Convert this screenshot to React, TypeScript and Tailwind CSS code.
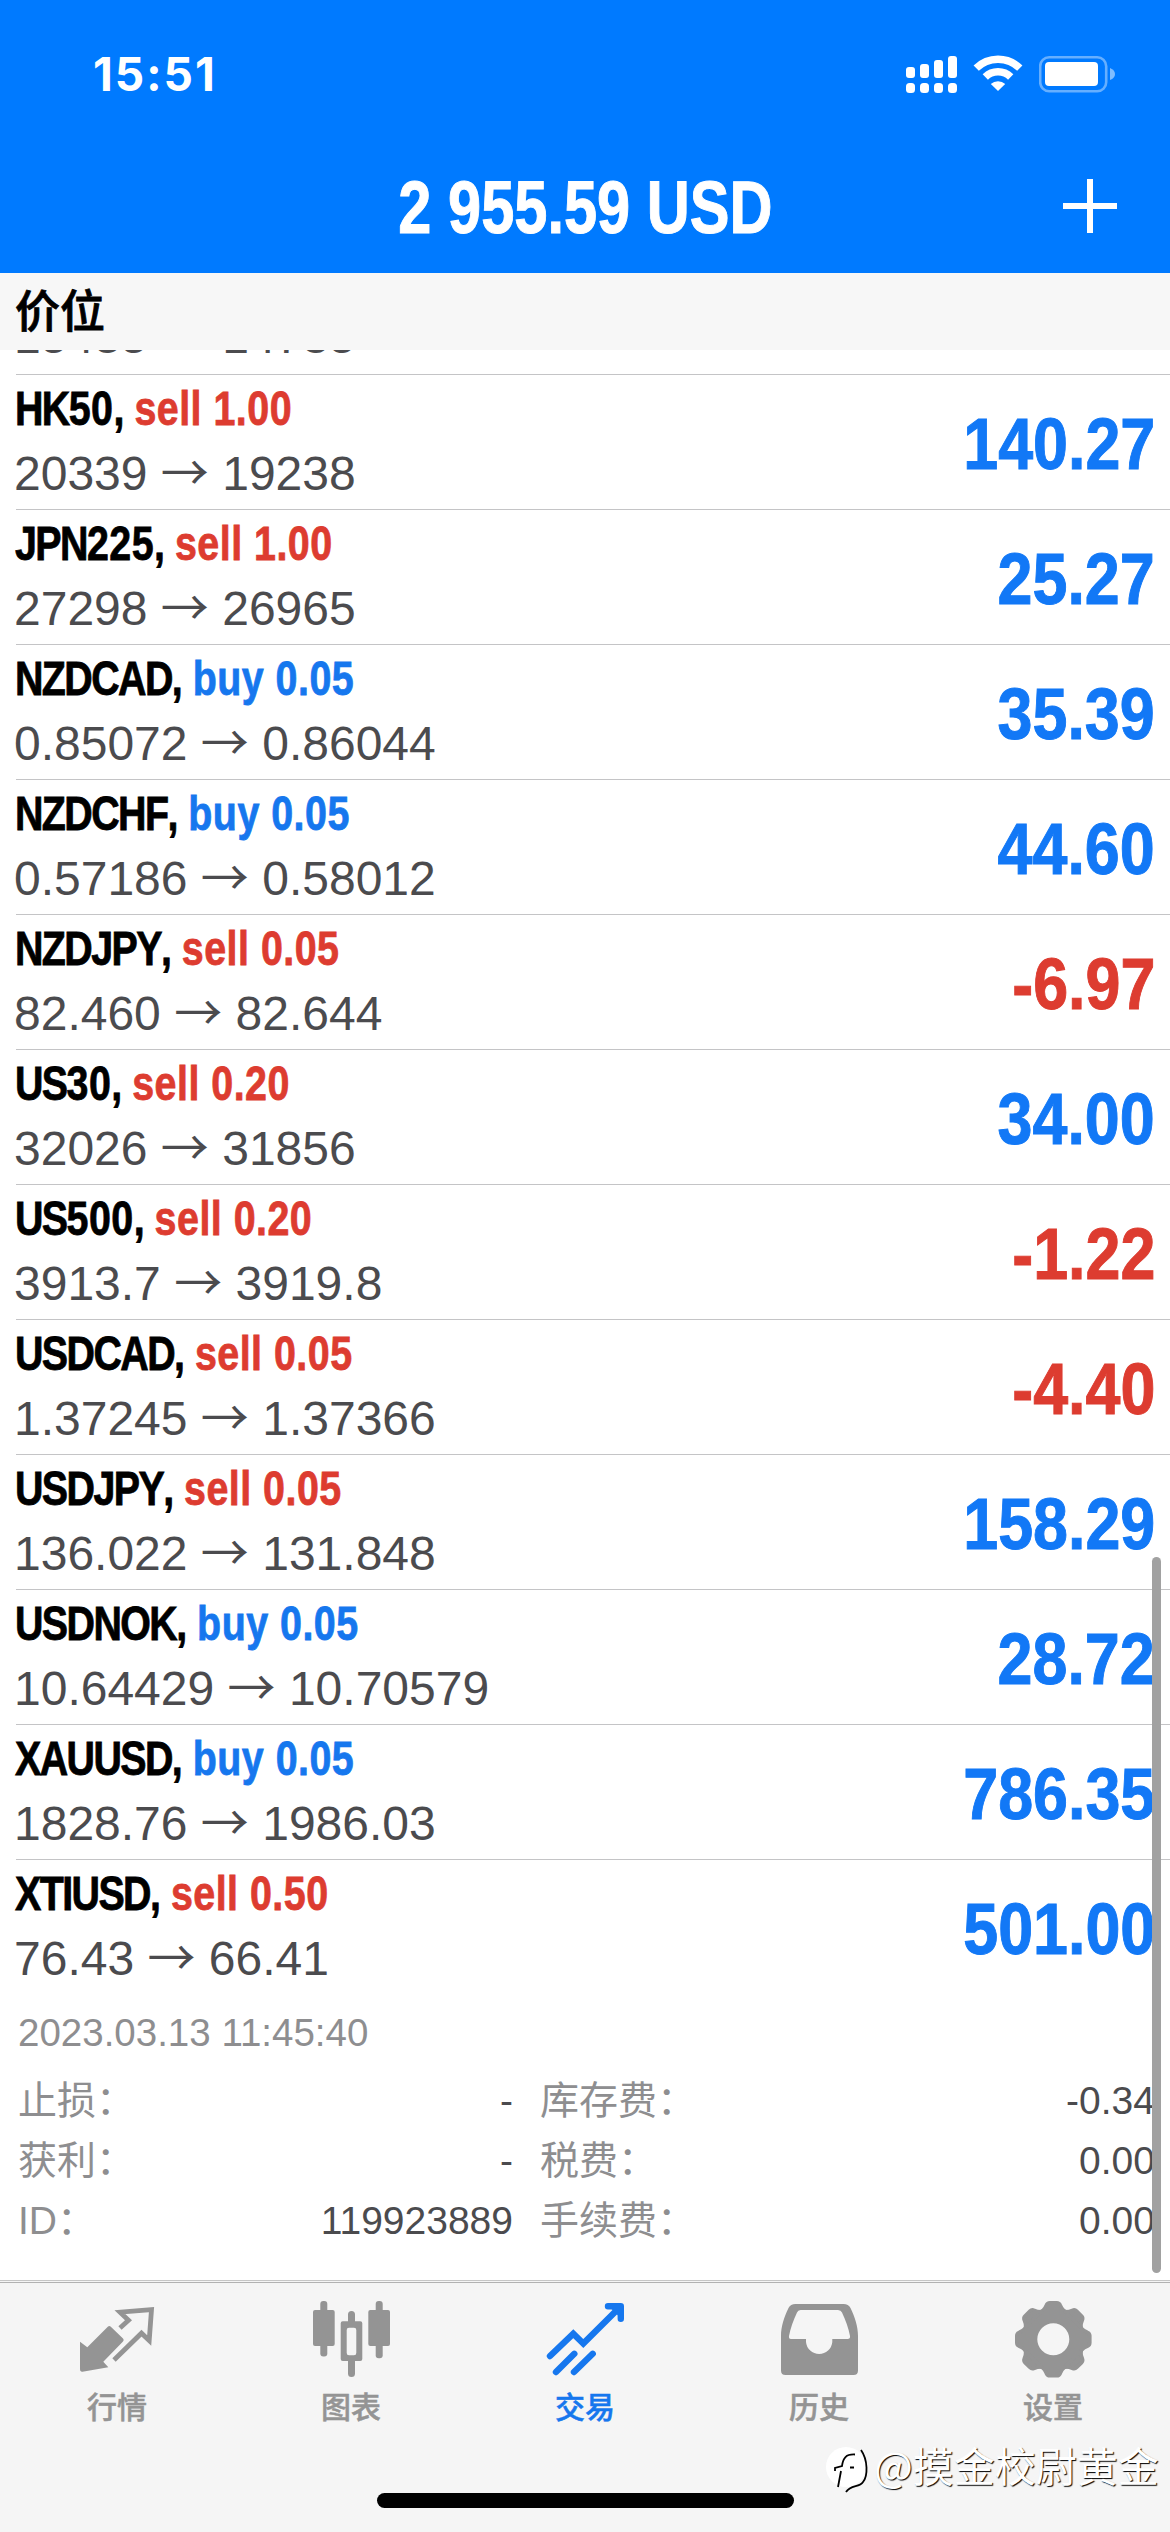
import { useState } from "react";
import type { ReactNode } from "react";

type Position = {
  ticker: string;
  index?: string;
  side: "buy" | "sell";
  volume: string;
  open: string;
  current: string;
  profit: string;
};

const POSITIONS: Position[] = [
  { ticker: "HK", index: "50", side: "sell", volume: "1.00", open: "20339", current: "19238", profit: "140.27" },
  { ticker: "JPN", index: "225", side: "sell", volume: "1.00", open: "27298", current: "26965", profit: "25.27" },
  { ticker: "NZDCAD", side: "buy", volume: "0.05", open: "0.85072", current: "0.86044", profit: "35.39" },
  { ticker: "NZDCHF", side: "buy", volume: "0.05", open: "0.57186", current: "0.58012", profit: "44.60" },
  { ticker: "NZDJPY", side: "sell", volume: "0.05", open: "82.460", current: "82.644", profit: "-6.97" },
  { ticker: "US", index: "30", side: "sell", volume: "0.20", open: "32026", current: "31856", profit: "34.00" },
  { ticker: "US", index: "500", side: "sell", volume: "0.20", open: "3913.7", current: "3919.8", profit: "-1.22" },
  { ticker: "USDCAD", side: "sell", volume: "0.05", open: "1.37245", current: "1.37366", profit: "-4.40" },
  { ticker: "USDJPY", side: "sell", volume: "0.05", open: "136.022", current: "131.848", profit: "158.29" },
  { ticker: "USDNOK", side: "buy", volume: "0.05", open: "10.64429", current: "10.70579", profit: "28.72" },
  { ticker: "XAUUSD", side: "buy", volume: "0.05", open: "1828.76", current: "1986.03", profit: "786.35" },
  { ticker: "XTIUSD", side: "sell", volume: "0.50", open: "76.43", current: "66.41", profit: "501.00" },
];

const DETAILS = [
  ["止损：", "-", "库存费：", "-0.34"],
  ["获利：", "-", "税费：", "0.00"],
  ["ID：", "119923889", "手续费：", "0.00"],
];

function StatusBar() {
  return (
    <div className="flex h-[144px] items-start justify-between pl-[93px] pr-[54px] text-white">
      <span className="mt-[46px] font-['Inter',sans-serif] text-[46px] font-bold leading-[56px] tracking-[2px]">15:51</span>
      <div className="mt-[54px] flex items-start">
        <svg width="52" height="40" viewBox="0 0 52 40" fill="currentColor">
          <rect x="0" y="13" width="9" height="11" rx="3" />
          <rect x="14" y="10" width="9" height="14" rx="3" />
          <rect x="28" y="6" width="9" height="18" rx="3" />
          <rect x="42" y="2" width="9" height="22" rx="3" />
          <rect x="0" y="29" width="9" height="10" rx="3.5" />
          <rect x="14" y="29" width="9" height="10" rx="3.5" />
          <rect x="28" y="29" width="9" height="10" rx="3.5" />
          <rect x="42" y="29" width="9" height="10" rx="3.5" />
        </svg>
        <svg className="ml-[15px]" width="50" height="40" viewBox="0 0 50 40" fill="none" stroke="currentColor">
          <path d="M3.2 14.2A31 31 0 0 1 46.8 14.2" strokeWidth="7.5" />
          <path d="M12.3 23A18 18 0 0 1 37.7 23" strokeWidth="7.5" />
          <path d="M25 37L17.8 30A10.5 10.5 0 0 1 32.2 30Z" fill="currentColor" stroke="none" />
        </svg>
        <svg className="ml-[16px]" width="77" height="40" viewBox="0 0 77 40" fill="currentColor">
          <rect x="1.2" y="3.3" width="66" height="34" rx="9" fill="none" stroke="#fff" strokeOpacity="0.4" strokeWidth="2.6" />
          <rect x="6" y="8" width="53" height="24" rx="4" />
          <path d="M71 14Q76 16 76 20T71 26Z" opacity="0.5" />
        </svg>
      </div>
    </div>
  );
}

function PriceLine({ open, current }: { open: string; current: string }) {
  return (
    <p className="-ml-0.5 whitespace-nowrap text-[48px] leading-[54px] text-[#4b4b4e]">
      {open} <span className="font-['Noto_Sans_CJK_SC',sans-serif] leading-none">→</span> {current}
    </p>
  );
}

function Row({ item }: { item: Position }) {
  return (
    <div className="ml-4 flex h-[135px] shrink-0 justify-between border-t border-[#c4c4c6] pr-[15px]">
      <div className="flex flex-col items-start gap-[9px] pt-[7px]">
        <p className="-ml-px origin-left scale-x-[0.82] whitespace-nowrap text-[48px] font-bold leading-[54px] [-webkit-text-stroke:0.8px]">
          <span className="tracking-[-1.9px] text-black">{item.ticker}</span>
          <span className="tracking-[0.6px] text-black">{item.index}</span>
          <span className="tracking-[-0.6px] text-black">, </span>
          <span className={item.side === "buy" ? "tracking-[0.6px] text-[#1677ee]" : "tracking-[0.6px] text-[#dd3c30]"}>
            {item.side} {item.volume}
          </span>
        </p>
        <PriceLine open={item.open} current={item.current} />
      </div>
      <span
        className={
          item.profit.startsWith("-")
            ? "mt-[28px] origin-right scale-x-[0.86] text-[73px] font-bold leading-[82px] text-[#dd3c30] [-webkit-text-stroke:1px]"
            : "mt-[28px] origin-right scale-x-[0.86] text-[73px] font-bold leading-[82px] text-[#1278f6] [-webkit-text-stroke:1px]"
        }
      >
        {item.profit}
      </span>
    </div>
  );
}

function QuotesIcon() {
  return (
    <svg width="78" height="78" viewBox="0 0 78 78" fill="currentColor">
      <path d="M2 41.7L9.3 47.3L29.8 26.8Q31.3 25.3 32.8 26.8L45 38.6Q46.5 40 45 41.6L25.3 61.7L30.3 67.3L4.5 71.7Q2 72 2 69Z" />
      <path d="M42 28L50.5 20.3L42 12.2L73.5 9.6L71.2 40.5L63.5 33.2L36 60" fill="none" stroke="currentColor" strokeWidth="4.8" />
    </svg>
  );
}

function ChartIcon() {
  return (
    <svg width="78" height="78" viewBox="0 0 78 78" fill="currentColor">
      <rect x="8.3" y="1" width="7" height="55.5" rx="3" />
      <rect x="1" y="10" width="21.7" height="36" rx="2" />
      <path
        fillRule="evenodd"
        d="M36 14.5a3.5 3.5 0 0 1 7 0V21.3H48.3a2 2 0 0 1 2 2V59a2 2 0 0 1-2 2H43V73.5a3.5 3.5 0 0 1-7 0V61H30.7a2 2 0 0 1-2-2V23.3a2 2 0 0 1 2-2H36ZM37 27.7a2.3 2.3 0 0 0-2.3 2.3V53a2.3 2.3 0 0 0 2.3 2.3H42A2.3 2.3 0 0 0 44.3 53V30A2.3 2.3 0 0 0 42 27.7Z"
      />
      <rect x="63.7" y="1" width="7" height="57.3" rx="3" />
      <rect x="56.3" y="10" width="21.7" height="36" rx="2" />
    </svg>
  );
}

function TradeIcon() {
  return (
    <svg width="78" height="78" viewBox="0 0 78 78" fill="none" stroke="currentColor" strokeWidth="6.4" strokeLinecap="round">
      <path d="M4 56L27.3 33.8L37.3 43.5L72 9" />
      <path d="M62 6.2H74.8V18.8" strokeLinejoin="round" />
      <path d="M66 8L73 15V8Z" fill="currentColor" strokeWidth="2" />
      <path d="M10 72L28.3 53.8M28 72L46.7 53.8" />
    </svg>
  );
}

function HistoryIcon() {
  return (
    <svg width="78" height="78" viewBox="0 0 78 78" fill="currentColor">
      <path
        fillRule="evenodd"
        d="M15.5 4H63.5Q68.5 4 70.5 8C75 17 78 27 78 36V70.5Q78 75 73.5 75H5.5Q1 75 1 70.5V36C1 27 4 17 8.5 8Q10.5 4 15.5 4ZM20.5 10Q18 10 17 12.5C13.5 20 10.5 28 9 36Q8.5 39 11 39H26V42A13.2 13.2 0 0 0 52.3 42V39H67.5Q70.5 39 70 36C68.5 28 65.500 20 62 12.5Q61 10 58 10Z"
      />
    </svg>
  );
}

function SettingsIcon() {
  return (
    <svg width="78" height="78" viewBox="-39.3 -39.3 78 78" fill="none" stroke="currentColor">
      <circle r="24" strokeWidth="16" />
      {[0, 45, 90, 135, 180, 225, 270, 315].map((angle) => (
        <path
          key={angle}
          d="M-11 -28Q-8 -31 -7 -34Q-6 -36.5 -3.5 -36.5H3.5Q6 -36.5 7 -34Q8 -31 11 -28Z"
          transform={`rotate(${angle})`}
          fill="currentColor"
          strokeWidth="3.6"
          strokeLinejoin="round"
        />
      ))}
    </svg>
  );
}

const TABS: { id: string; label: string; icon: ReactNode }[] = [
  { id: "quotes", label: "行情", icon: <QuotesIcon /> },
  { id: "chart", label: "图表", icon: <ChartIcon /> },
  { id: "trade", label: "交易", icon: <TradeIcon /> },
  { id: "history", label: "历史", icon: <HistoryIcon /> },
  { id: "settings", label: "设置", icon: <SettingsIcon /> },
];

export default function App() {
  const [tab, setTab] = useState("trade");

  return (
    <div className="relative flex h-[2532px] w-[1170px] flex-col overflow-hidden bg-white font-['Liberation_Sans','Noto_Sans_CJK_SC',sans-serif]">
      <header className="h-[273px] shrink-0 bg-[#007aff]">
        <StatusBar />
        <div className="grid h-[129px] grid-cols-[1fr_auto_1fr] items-start text-white">
          <span />
          <h1 className="mt-[22px] scale-x-[0.805] whitespace-nowrap text-[74px] font-bold leading-[84px] [-webkit-text-stroke:1px]">
            2 955.59 USD
          </h1>
          <button aria-label="添加" className="mr-[53px] mt-[35px] justify-self-end">
            <svg width="54" height="54" viewBox="0 0 54 54" stroke="currentColor" strokeWidth="6">
              <path d="M27 0V54M0 27H54" />
            </svg>
          </button>
        </div>
      </header>

      <h2 className="h-[77px] shrink-0 bg-[#f7f7f7] pl-[15px] text-[45px] font-medium leading-[79px] text-black [-webkit-text-stroke:0.8px]">
        价位
      </h2>

      <main className="relative flex h-[1930px] shrink-0 flex-col">
        {/* Tail of the row scrolled under the section header */}
        <div className="ml-4 flex h-[24px] shrink-0 flex-col justify-end overflow-hidden pb-[10px]">
          <PriceLine open="15435" current="14785" />
        </div>

        {POSITIONS.map((item) => (
          <Row key={item.ticker + item.index} item={item} />
        ))}

        {/* Details of the expanded position */}
        <div className="pl-[18px] pr-[15px] text-[39px] text-[#8e8e90]">
          <p className="mt-[17px] text-[38.5px] leading-[44px]">2023.03.13 11:45:40</p>
          <div className="mt-[16px] flex flex-col">
            {DETAILS.map(([label, value, feeLabel, fee]) => (
              <div key={label} className="grid h-[60px] grid-cols-[495px_1fr_auto] items-center leading-[60px]">
                <div className="flex justify-between">
                  <span>{label}</span>
                  <span className="text-[#4b4b4e]">{value}</span>
                </div>
                <span className="pl-[27px]">{feeLabel}</span>
                <span className="text-[#4b4b4e]">{fee}</span>
              </div>
            ))}
          </div>
        </div>

        <div className="absolute right-[9px] top-[1207px] h-[716px] w-[9px] rounded-full bg-[#a1a1a1]" />
      </main>

      <nav className="flex h-[252px] shrink-0 flex-col border-t border-[#c6c6c6] bg-[#f5f5f5]">
        <div className="mt-px grid grid-cols-5 border-t border-[#b2b2b2] pt-[17px]">
          {TABS.map(({ id, label, icon }) => (
            <button
              key={id}
              onClick={() => setTab(id)}
              className={tab === id ? "flex flex-col items-center text-[#1677ee]" : "flex flex-col items-center text-[#949494]"}
            >
              {icon}
              <span className="mt-[8px] text-[30px] font-medium leading-[44px] [-webkit-text-stroke:0.5px]">{label}</span>
            </button>
          ))}
        </div>
      </nav>

      {/* Home indicator */}
      <div className="absolute bottom-[24px] left-[377px] h-[15px] w-[417px] rounded-full bg-black" />

      <div className="absolute left-[825px] top-[2440px] flex items-start whitespace-nowrap text-[41px] leading-[50px] text-white">
        <svg width="44" height="54" viewBox="0 0 44 54" fill="none" stroke="#000" strokeWidth="1.8">
          <circle cx="21" cy="27" r="20" fill="#fff" stroke="none" />
          <path d="M36 10C43 20 43 36 38 42C34 48 26 44 21 52" />
          <path d="M30 14.5C21 14 18 18 17 26L10 28V31M16 31L13 47M25 27.5H29" />
        </svg>
        <span className="-mt-px ml-[5px] font-['Noto_Sans_CJK_SC',sans-serif] [text-shadow:1px_1px_1px_#000]">@摸金校尉黄金</span>
      </div>
    </div>
  );
}
